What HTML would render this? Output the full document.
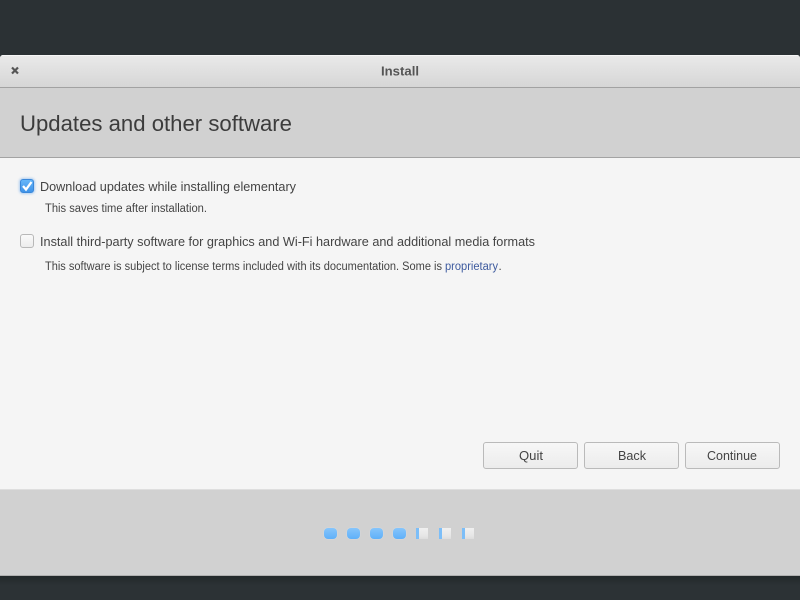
<!DOCTYPE html>
<html>
<head>
<meta charset="utf-8">
<style>
html,body{margin:0;padding:0;width:800px;height:600px;overflow:hidden;background:#2b3134;}
.a{position:absolute;}
svg text{font-family:"Liberation Sans",sans-serif;}
.btn{position:absolute;top:442px;width:95px;height:27px;box-sizing:border-box;border:1px solid #bababa;border-radius:3px;background:linear-gradient(#f7f7f7,#ececec);}
.on{position:absolute;top:528px;width:13px;height:11px;border-radius:4px;background:linear-gradient(#86c5fb,#5fb0f9);box-shadow:0 0 1px #dfe9f2;}
.off{position:absolute;top:528px;width:12px;height:11px;box-sizing:border-box;border-left:3px solid #7cbef8;background:linear-gradient(#f0f0f0,#e6e6e6 70%,#dcdcdc);}
</style>
</head>
<body>
<div class="a" style="left:0;top:0;width:800px;height:55px;background:#2b3134;"></div>
<div class="a" style="left:0;top:55px;width:800px;height:521px;background:#f5f5f5;border-radius:3px 3px 0 0;overflow:hidden;">
  <div class="a" style="left:0;top:0;width:800px;height:32px;background:linear-gradient(#e9e9e9,#d6d6d6);border-top:1px solid #f6f6f6;box-sizing:border-box;"></div>
  <div class="a" style="left:0;top:32px;width:800px;height:1px;background:#a2a2a2;"></div>
  <div class="a" style="left:0;top:33px;width:800px;height:69px;background:#d1d1d1;"></div>
  <div class="a" style="left:0;top:102px;width:800px;height:1px;background:#a3a3a3;"></div>
  <div class="a" style="left:0;top:434px;width:800px;height:1px;background:#dedede;"></div>
  <div class="a" style="left:0;top:435px;width:800px;height:86px;background:#d1d1d1;"></div>
</div>
<div class="a" style="left:0;top:575px;width:800px;height:1px;background:#b0b0b0;"></div>
<div class="a" style="left:0;top:576px;width:800px;height:24px;background:linear-gradient(#22282a,#2c3235 40%);"></div>

<!-- checkboxes -->
<div class="a" style="left:20px;top:179px;width:14px;height:14px;box-sizing:border-box;background:linear-gradient(#66b6f9,#3f93e8);border:1px solid #3a88da;border-radius:3px;box-shadow:0 0 2px 1px rgba(90,160,235,.45);"></div>
<div class="a" style="left:20px;top:234px;width:14px;height:14px;box-sizing:border-box;background:linear-gradient(#fafafa,#ececec);border:1px solid #b8b8b8;border-radius:3px;"></div>

<!-- buttons -->
<div class="btn" style="left:483px;"></div>
<div class="btn" style="left:584px;"></div>
<div class="btn" style="left:685px;"></div>

<!-- progress dots -->
<div class="on" style="left:324px;"></div>
<div class="on" style="left:347px;"></div>
<div class="on" style="left:370px;"></div>
<div class="on" style="left:393px;"></div>
<div class="off" style="left:416px;"></div>
<div class="off" style="left:439px;"></div>
<div class="off" style="left:462px;"></div>

<svg class="a" style="left:0;top:0;" width="800" height="600" viewBox="0 0 800 600">
  <path d="M12 67.500 L18 73.500 M18 67.500 L12 73.500" stroke="#555" stroke-width="2.200" fill="none"/>
  <path d="M23 186 L26 189.500 L31.500 182" stroke="#fff" stroke-width="2.300" fill="none"/>
  <text x="381" y="75.500" font-size="12.500" font-weight="bold" fill="#555" textLength="38" lengthAdjust="spacingAndGlyphs">Install</text>
  <text x="20" y="131" font-size="22.500" fill="#3c3c3c" textLength="272" lengthAdjust="spacingAndGlyphs">Updates and other software</text>
  <text x="40" y="191" font-size="13" fill="#444" textLength="256" lengthAdjust="spacingAndGlyphs">Download updates while installing elementary</text>
  <text x="45" y="212" font-size="11.500" fill="#444" textLength="162" lengthAdjust="spacingAndGlyphs">This saves time after installation.</text>
  <text x="40" y="246" font-size="13" fill="#444" textLength="495" lengthAdjust="spacingAndGlyphs">Install third-party software for graphics and Wi-Fi hardware and additional media formats</text>
  <text x="45" y="270" font-size="11.500" fill="#444" textLength="397" lengthAdjust="spacingAndGlyphs">This software is subject to license terms included with its documentation. Some is</text>
  <text x="445" y="270" font-size="11.500" fill="#3d5a9e" textLength="53" lengthAdjust="spacingAndGlyphs">proprietary</text>
  <text x="498.500" y="270" font-size="11.500" fill="#444">.</text>
  <text x="519" y="460" font-size="13" fill="#444" textLength="24" lengthAdjust="spacingAndGlyphs">Quit</text>
  <text x="618" y="460" font-size="13" fill="#444" textLength="28" lengthAdjust="spacingAndGlyphs">Back</text>
  <text x="707" y="460" font-size="13" fill="#444" textLength="50" lengthAdjust="spacingAndGlyphs">Continue</text>
</svg>
</body>
</html>
